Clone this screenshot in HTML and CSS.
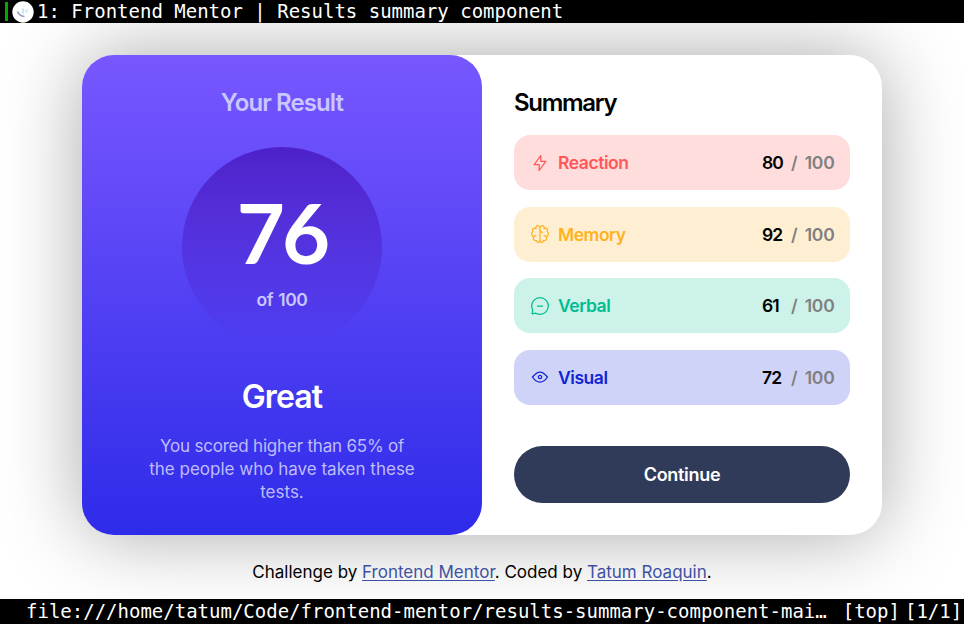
FILE: index.html
```html
<!DOCTYPE html>
<html lang="en">
<head>
<meta charset="utf-8">
<title>Frontend Mentor | Results summary component</title>
<link rel="stylesheet" href="styles.css">
</head>
<body>
<header class="tabbar">
  <span class="tab-marker"></span>
  <svg class="favicon" viewBox="0 0 22 22"><circle cx="11" cy="11" r="10.7" fill="#fff"/><path d="M5.5 10.5c1 3 3 4.6 7 4.9" fill="none" stroke="#8f9bc8" stroke-width="1.5"/><path d="M11 7.5v5" stroke="#9fd8e5" stroke-width="1.2"/><path d="M16 8.5l-3 1.5 3 1.7" fill="none" stroke="#b9e3ee" stroke-width="1"/></svg>
  <span class="tab-title">1: Frontend Mentor | Results summary component</span>
</header>
<main class="page">
  <section class="card">
    <div class="result">
      <h2 class="result-title"><span>Your Result</span></h2>
      <div class="circle">
        <span class="score">76</span>
        <span class="of">of 100</span>
      </div>
      <h1 class="grade"><span>Great</span></h1>
      <p class="message"><span class="first-line">You scored higher than 65% of</span><br>the people who have taken these<br>tests.</p>
    </div>
    <div class="summary">
      <h2 class="summary-title"><span>Summary</span></h2>
      <ul class="rows">
        <li class="row reaction">
          <svg class="icon" viewBox="0 0 20 20"><path d="M10.833 8.333V2.5l-6.666 9.167h5V17.5l6.666-9.167h-5Z"/></svg>
          <span class="name">Reaction</span><span class="value">80</span><span class="total">/ 100</span>
        </li>
        <li class="row memory">
          <svg class="icon" viewBox="0 0 20 20"><path d="M5.833 11.667a2.5 2.5 0 1 0 .834 4.858"/><path d="M3.553 13.004a3.333 3.333 0 0 1-.728-5.53m.025-.067a2.083 2.083 0 0 1 2.983-2.824m.199.054A2.083 2.083 0 1 1 10 3.75v12.917a1.667 1.667 0 0 1-3.333 0M10 5.833a2.5 2.5 0 0 0 2.5 2.5m1.667 3.334a2.5 2.5 0 1 1-.834 4.858"/><path d="M16.447 13.004a3.334 3.334 0 0 0 .728-5.53m-.025-.067a2.083 2.083 0 0 0-2.983-2.824M10 3.75a2.085 2.085 0 0 1 2.538-2.033 2.084 2.084 0 0 1 1.43 2.92m-.635 12.03a1.667 1.667 0 0 1-3.333 0"/></svg>
          <span class="name">Memory</span><span class="value">92</span><span class="total">/ 100</span>
        </li>
        <li class="row verbal">
          <svg class="icon" viewBox="0 0 20 20"><path d="M7.5 10h5M10 18.333A8.333 8.333 0 1 0 1.667 10c0 1.518.406 2.942 1.115 4.167l-.699 3.75 3.75-.699A8.295 8.295 0 0 0 10 18.333Z"/></svg>
          <span class="name">Verbal</span><span class="value">61</span><span class="total">/ 100</span>
        </li>
        <li class="row visual">
          <svg class="icon" viewBox="0 0 20 20"><path d="M10 11.667a1.667 1.667 0 1 0 0-3.334 1.667 1.667 0 0 0 0 3.334Z"/><path d="M17.5 10c-1.574 2.492-4.402 5-7.5 5s-5.926-2.508-7.5-5C4.416 7.632 6.66 5 10 5s5.584 2.632 7.5 5Z"/></svg>
          <span class="name">Visual</span><span class="value">72</span><span class="total">/ 100</span>
        </li>
      </ul>
      <button class="continue"><span>Continue</span></button>
    </div>
  </section>
  <p class="attribution">Challenge by <a href="#">Frontend Mentor</a>. Coded by <a href="#">Tatum Roaquin</a>.</p>
</main>
<footer class="statusbar">
  <span class="url">file:///home/tatum/Code/frontend-mentor/results-summary-component-mai…</span>
  <span class="scroll">[top]</span>
  <span class="tabs">[1/1]</span>
</footer>
</body>
</html>
```
FILE: styles.css
```css
* { box-sizing: border-box; margin: 0; padding: 0; }
body {
  width: 964px; height: 624px; overflow: hidden;
  display: flex; flex-direction: column;
  background: #fff; color: #000;
  font-family: Inter, "Liberation Sans", sans-serif;
  font-size: 17px;
}
.tabbar, .statusbar {
  display: flex; flex: none; background: #000; color: #fff;
  font: 19px/23px "DejaVu Sans Mono", monospace; white-space: pre;
}
.tabbar { height: 23px; padding-left: 5px; }
.tab-marker { width: 3px; height: 19px; margin-top: 2px; background: #00a800; }
.favicon { width: 22px; height: 22px; margin: 1px 3px 0 4px; }
.statusbar { height: 25px; line-height: 25px; padding-left: 26px; }
.scroll { margin-left: 16px; }
.tabs { margin-left: 5px; }

.page { flex: 1; display: flex; flex-direction: column; align-items: center; padding-top: 32px; overflow: hidden; }
.card {
  display: flex; width: 800px; height: 480px; flex: none;
  border-radius: 32px; background: #fff; box-shadow: 0 0 80px rgba(0, 0, 0, .34);
}
.result {
  width: 400px; padding-top: 32px; border-radius: 32px;
  display: flex; flex-direction: column; align-items: center; text-align: center;
  background: linear-gradient(#7857ff, #2e2be9); color: #c8c7ff;
}
.result-title, .summary-title { font-size: 24px; line-height: 32px; font-weight: 600; }
.result-title { letter-spacing: -.9px; }
.summary-title { letter-spacing: -1.3px; }
.circle {
  width: 200px; height: 200px; margin-top: 28px; border-radius: 50%;
  display: flex; flex-direction: column; align-items: center;
  background: linear-gradient(#4d21c9, rgba(37, 33, 201, 0));
}
.score { height: 94px; margin-top: 38px; color: #fff; font: 700 83px/94px Lato, sans-serif; letter-spacing: -3px; }
.of { margin-top: 9px; font-size: 17.5px; line-height: 23px; font-weight: 600; letter-spacing: -.4px; word-spacing: 1px; }
.grade { margin-top: 29px; font-size: 32px; line-height: 42px; font-weight: 600; color: #fff; letter-spacing: -.9px; }
.message { margin-top: 17px; line-height: 23px; color: #bfbdfb; }
.first-line { letter-spacing: -.2px; }

.summary { width: 400px; padding: 32px; }
.rows { list-style: none; margin-top: 16px; display: grid; gap: 16.6px; }
.row { display: flex; align-items: center; height: 55px; padding: 0 16px; border-radius: 16px; font-size: 17.5px; font-weight: 600; letter-spacing: -.45px; }
.icon { width: 20px; height: 20px; margin-right: 8px; fill: none; stroke: currentColor; stroke-width: 1.25; stroke-linecap: round; stroke-linejoin: round; }
.name { flex: 1; }
.value { width: 21px; color: #000; letter-spacing: -.9px; }
.total { width: 43px; margin-left: 8px; color: #808080; white-space: nowrap; letter-spacing: -.2px; word-spacing: 3px; }
.reaction { background: #ffdddd; color: #ff5757; }
.memory { background: #ffefd2; color: #ffb21f; }
.verbal { background: #ccf2e9; color: #00bd91; }
.visual { background: #d0d3f8; color: #1125d4; }
.continue {
  display: block; width: 336px; height: 57px; margin-top: 41px; border: 0; border-radius: 29px;
  background: #303b5a; color: #fff; font: 600 18px/23px Inter, sans-serif; letter-spacing: -.3px;
}
.attribution { margin-top: 26px; line-height: 23px; white-space: nowrap; }
.attribution a { color: #3e52a3; text-underline-offset: 2px; }
```
